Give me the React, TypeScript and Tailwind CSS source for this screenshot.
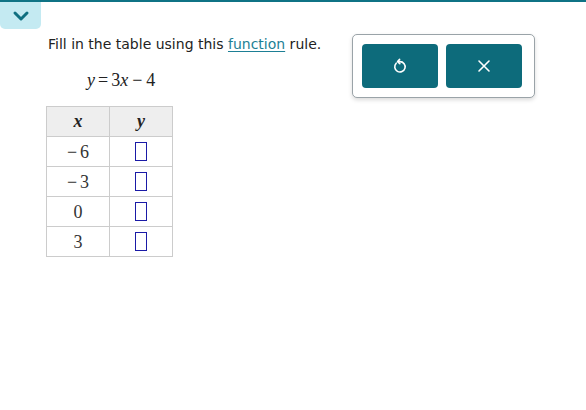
import React from "react";

function InputBox() {
  return <div className="w-[12px] h-[19px] border border-[#1a1aa6] bg-white mx-auto" />;
}

export default function App() {
  const rows = ["\u2212\u20066", "\u2212\u20063", "0", "3"];
  return (
    <div className="relative w-[586px] h-[410px] bg-white border-t-2 border-[#0f7385] overflow-hidden">
      <div className="absolute left-0 top-0 w-[41px] h-[27px] bg-[#c4eaf2] rounded-b-[5px] flex items-center justify-center">
        <svg width="18" height="12" viewBox="0 0 18 12">
          <path d="M3 3 L9 9 L15 3" fill="none" stroke="#0f6f80" strokeWidth="3" strokeLinecap="round" strokeLinejoin="round" />
        </svg>
      </div>
      <div className="flex items-start">
        <div className="pl-[48px] pt-[33px] flex flex-col items-start">
          <p className="text-[14px] leading-[18px] text-[#222] font-['DejaVu_Sans',sans-serif]">
            Fill in the table using this{" "}
            <span className="text-[#1d7f95] underline underline-offset-2">function</span> rule.
          </p>
          <div className="mt-[16px] ml-[39px] text-[18px] leading-[22px] text-[#222] font-['Liberation_Serif',serif]">
            <i>y</i>
            <span className="mx-[3px]">=</span>3<i>x</i>
            <span className="mx-[4px]">{"\u2212"}</span>4
          </div>
          <table className="mt-[15px] -ml-[2px] border-collapse font-['Liberation_Serif',serif] text-[18px] text-[#333]">
            <thead>
              <tr className="bg-[#eeeeee]">
                <th className="w-[63px] h-[30px] p-0 border border-[#cccccc] font-bold italic text-[18px] text-[#222]">x</th>
                <th className="w-[63px] h-[30px] p-0 border border-[#cccccc] font-bold italic text-[18px] text-[#222]">y</th>
              </tr>
            </thead>
            <tbody>
              {rows.map((r) => (
                <tr key={r}>
                  <td className="h-[30px] p-0 leading-[28px] border border-[#cccccc] text-center">{r}</td>
                  <td className="h-[30px] p-0 border border-[#cccccc]">
                    <InputBox />
                  </td>
                </tr>
              ))}
            </tbody>
          </table>
        </div>
        <div className="ml-auto mr-[51px] mt-[32px] pl-[9px] pr-[12px] py-[9px] border border-[#9aa3a8] rounded-[5px] bg-white shadow-[0_2px_4px_rgba(0,0,0,0.15)] flex gap-[8px]">
          <button className="w-[76px] h-[44px] rounded-[4px] bg-[#0d6b7b] flex items-center justify-center">
            <svg width="16" height="18" viewBox="0 0 16 18" fill="none" stroke="white" strokeWidth="1.6" strokeLinecap="round" strokeLinejoin="round">
              <path d="M4.2 6.2 A5.2 5.2 0 1 0 8 4.6 L6.2 4.6" />
              <path d="M7.6 2.4 L5.6 4.6 L7.8 6.6" />
            </svg>
          </button>
          <button className="w-[76px] h-[44px] rounded-[4px] bg-[#0d6b7b] flex items-center justify-center">
            <svg width="14" height="14" viewBox="0 0 14 14" fill="none" stroke="white" strokeWidth="1.6" strokeLinecap="round">
              <path d="M2 2 L12 12 M12 2 L2 12" />
            </svg>
          </button>
        </div>
      </div>
    </div>
  );
}
